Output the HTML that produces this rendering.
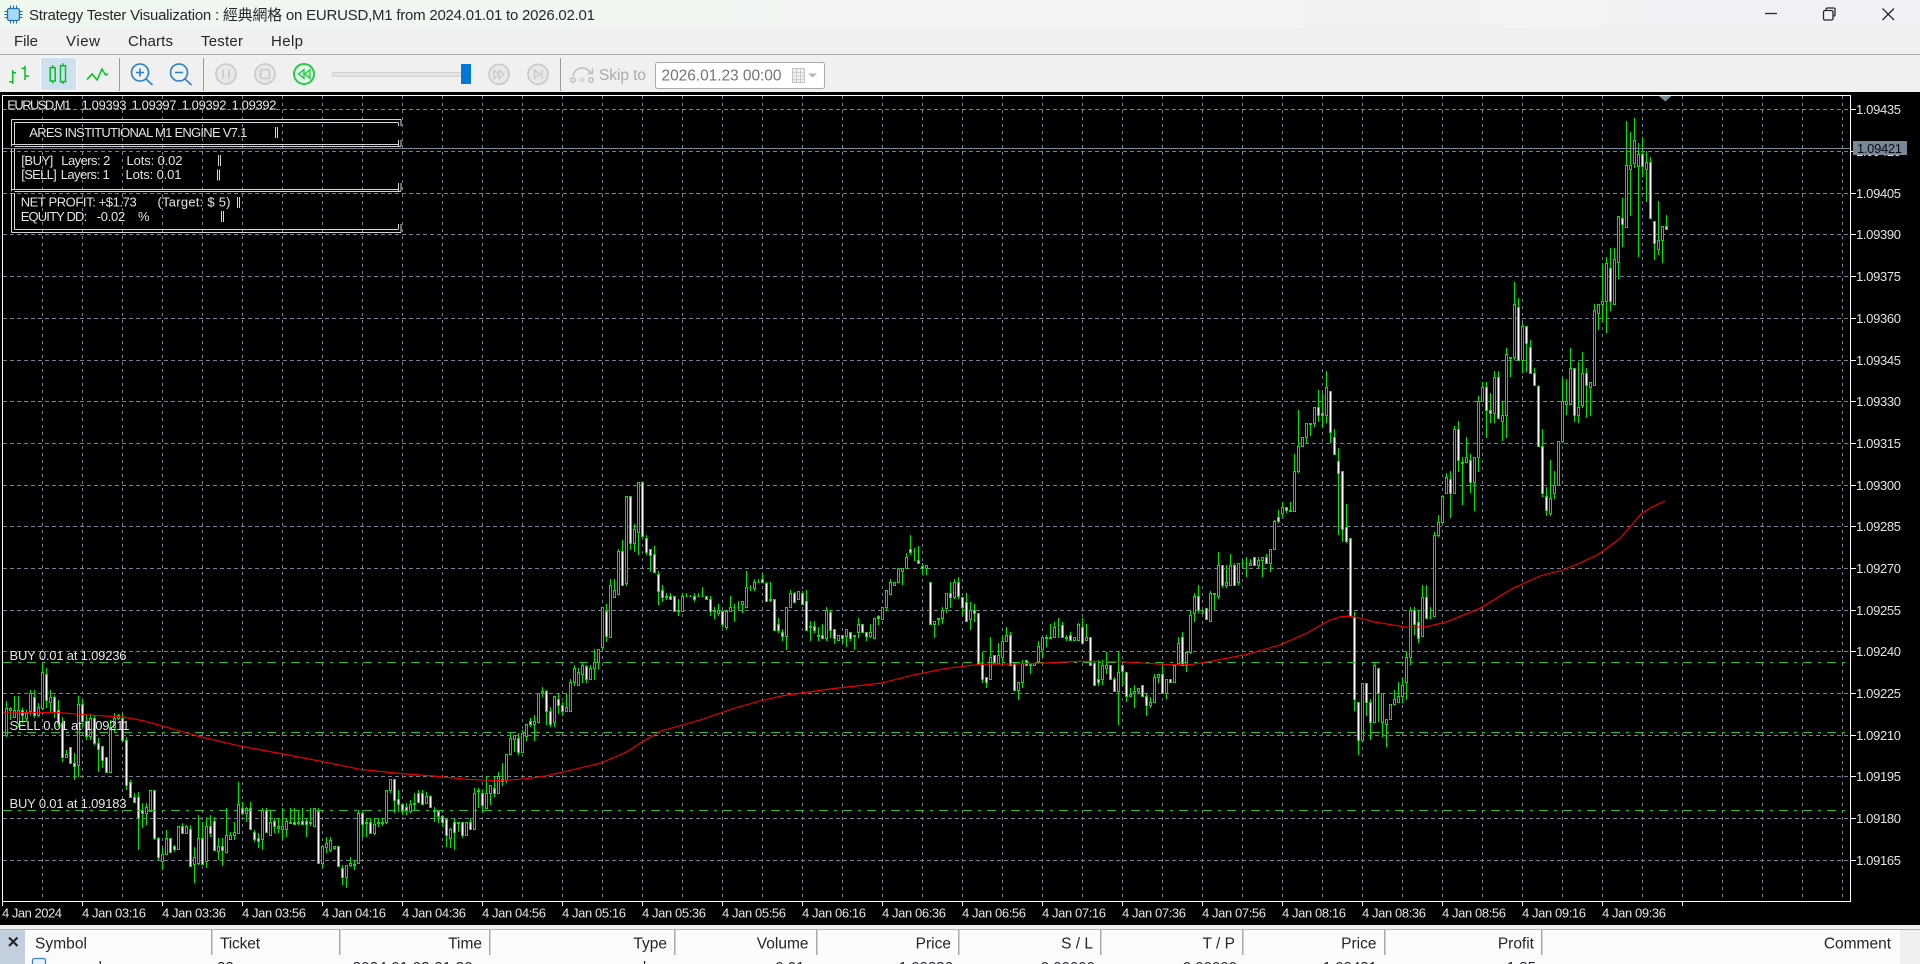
<!DOCTYPE html>
<html><head><meta charset="utf-8"><title>Strategy Tester Visualization</title>
<style>
html,body{margin:0;padding:0;width:1920px;height:964px;overflow:hidden;background:#000}
svg{display:block}
text{font-family:"Liberation Sans","Noto Sans CJK TC",sans-serif}
.m{font-size:15px;fill:#22262c}
.c{font-size:13px;fill:#e4e4e4}
.h{font-size:15.5px;fill:#22262c}
.r{font-size:15px;fill:#22262c}
</style></head><body>
<svg xmlns="http://www.w3.org/2000/svg" width="1920" height="964" viewBox="0 0 1920 964">
<defs><linearGradient id="tb" x1="0" x2="1" y1="0" y2="0"><stop offset="0" stop-color="#eef8ef"/><stop offset=".5" stop-color="#f2f4f1"/><stop offset="1" stop-color="#f3f0f6"/></linearGradient></defs>
<rect width="1920" height="964" fill="#000"/>
<rect width="1920" height="28" fill="url(#tb)"/>
<rect y="28" width="1920" height="65" fill="#f0f0f0"/>
<rect y="54" width="1920" height="1" fill="#a9a9a9"/>
<!-- title icon -->
<g stroke="#1e6fb0" fill="none"><rect x="7.5" y="8.5" width="12" height="12" rx="2" fill="#a6dbf7" stroke-width="1.3"/><path d="M4.5 11.5h3M4.5 14.5h3M4.5 17.5h3M19.5 11.5h3M19.5 14.5h3M19.5 17.5h3M10.5 5.5v3M13.5 5.5v3M16.5 5.5v3M10.5 20.5v3M13.5 20.5v3M16.5 20.5v3" stroke-width="1"/></g>
<text x="29" y="20" font-size="15" fill="#26282c" textLength="566">Strategy Tester Visualization : 經典網格 on EURUSD,M1 from 2024.01.01 to 2026.02.01</text>
<!-- window buttons -->
<g stroke="#26282c" fill="none" stroke-width="1.3"><path d="M1765 13.5h12"/><rect x="1823.5" y="10.5" width="9.5" height="9.5" rx="1.5"/><path d="M1826 10v-1a1.5 1.5 0 0 1 1.5-1h6a1.5 1.5 0 0 1 1.5 1v6a1.5 1.5 0 0 1-1.5 1h-.5"/><path d="M1882.500 8.500l11.500 11.500M1894 8.500l-11.500 11.500"/></g>
<!-- menu -->
<text class="m" x="14" y="46" textLength="24">File</text>
<text class="m" x="66" y="46" textLength="34">View</text>
<text class="m" x="128" y="46" textLength="45">Charts</text>
<text class="m" x="201" y="46" textLength="42">Tester</text>
<text class="m" x="271" y="46" textLength="32">Help</text>
<!-- toolbar -->
<path d="M9.300 81.700h3.400M12.700 84V70M12.700 72.700h3.400M25 80V65.700M25 68.300h-3.400M25 76h4" stroke="#00c020" stroke-width="1.500" fill="none"/>
<rect x="40.500" y="57.500" width="36" height="33" fill="#cfe0f0" stroke="#fafcff"/>
<g stroke="#00c020" fill="none" stroke-width="1.500"><path d="M52.700 65v18.300M63 63.300v20.700"/><rect x="50.200" y="67.700" width="5" height="13.300" fill="#cfe0f0"/><rect x="60.500" y="65.700" width="5" height="16" fill="#cfe0f0"/></g>
<path d="M87 79.500l5-5.500 5 6 5-11 3.500 6 2.500-1" stroke="#00c020" stroke-width="1.500" fill="none"/>
<rect x="119" y="58" width="1" height="33" fill="#9a9a9a"/>
<g stroke="#2a7fc8" fill="none" stroke-width="1.600"><circle cx="140" cy="72.500" r="8.500"/><path d="M146 79l6.500 6M136 72.500h8M140 68.500v8"/><circle cx="179" cy="72.500" r="8.500"/><path d="M185 79l6.500 6M175 72.500h8"/></g>
<rect x="203" y="58" width="1" height="33" fill="#9a9a9a"/>
<g stroke="#c8c8c8" fill="#e8e8e8" stroke-width="1.600"><circle cx="226" cy="74" r="10"/><path d="M223 69.500v9M229 69.500v9" fill="none"/><circle cx="265" cy="74" r="10"/><rect x="260.500" y="69.500" width="9" height="9" rx="2" fill="none"/></g>
<circle cx="304" cy="74" r="10" fill="#eaf8ee" stroke="#22cc44" stroke-width="2"/><path d="M304 69.500l-5.500 4.500 5.500 4.500zM310 69.500l-5.500 4.500 5.500 4.500z" fill="#b8ecc6" stroke="#22cc44" stroke-width="1.300"/>
<rect x="332.500" y="72.500" width="135" height="4" fill="#e4e4e4" stroke="#d4d4d4"/>
<rect x="461" y="64" width="10" height="20" fill="#0078d7"/>
<g stroke="#c8c8c8" fill="#e8e8e8" stroke-width="1.600"><circle cx="499" cy="74.300" r="10"/><path d="M494 70l5 4.300-5 4.300zM499 70l5 4.300-5 4.300z" fill="none" stroke-width="1.200"/><circle cx="538" cy="74.300" r="10"/><path d="M534.500 70l5.500 4.300-5.500 4.300zM542 70v8.600" fill="none" stroke-width="1.200"/></g>
<rect x="560" y="58" width="1" height="33" fill="#9a9a9a"/>
<g stroke="#bdbdbd" fill="none" stroke-width="1.500"><path d="M573 76c1-6 6-8.500 10-8 3 .5 6 2 8 5"/><path d="M592.500 68.500v5h-5"/><circle cx="573" cy="80" r="2.200"/><circle cx="591" cy="80" r="2.200"/></g><circle cx="582" cy="80" r="2.500" fill="#d6d6d6"/>
<text x="599" y="80" font-size="15.500" fill="#ababab" textLength="47">Skip to</text>
<rect x="655.500" y="62.500" width="169" height="26" rx="2" fill="#fff" stroke="#ababab"/>
<text x="661.500" y="80.500" font-size="15.500" fill="#757575" textLength="120">2026.01.23 00:00</text>
<g stroke="#c4c4c4" fill="#f2f2f2"><rect x="792.500" y="68.500" width="12" height="14"/><path d="M792.500 72.500h12M792.500 76h12M792.500 79.500h12M796.500 68.500v14M800.500 68.500v14" fill="none" stroke-width=".8"/></g><path d="M808 73.500h9l-4.500 4z" fill="#b4b4b4"/>
<!-- chart black -->
<rect x="0" y="92" width="1920" height="833" fill="#000"/>
<g shape-rendering="crispEdges" fill="none">
<path id="gh" stroke="#708294" stroke-width="1" stroke-dasharray="4 3" d="M3 109.500H1851M3 151.500H1851M3 193.500H1851M3 234.500H1851M3 276.500H1851M3 318.500H1851M3 360.500H1851M3 401.500H1851M3 443.500H1851M3 485.500H1851M3 526.500H1851M3 568.500H1851M3 610.500H1851M3 651.500H1851M3 693.500H1851M3 735.500H1851M3 776.500H1851M3 818.500H1851M3 860.500H1851"/>
<path id="gv" stroke="#708294" stroke-width="1" stroke-dasharray="3 4" d=""/>
<path id="wk" stroke="#00e400" stroke-width="1"/>
<path id="bu" stroke="#00e400" stroke-width="1" fill="#000"/>
<path id="be" stroke="#00e400" stroke-width="1" fill="#fff"/>
<path stroke="#22c422" stroke-width="1.300" stroke-dasharray="9 6 3 6" d="M3 662.500H1851M3 732.500H1851M3 810.500H1851"/>
<path stroke="#778899" stroke-width="1.300" d="M3 148.500H1851"/>
<rect x="2.500" y="95.500" width="1848" height="806" stroke="#fff" stroke-width="1.200"/>
<path id="tk" stroke="#fff" stroke-width="1" d="M1851 109.500h5M1851 151.500h5M1851 193.500h5M1851 234.500h5M1851 276.500h5M1851 318.500h5M1851 360.500h5M1851 401.500h5M1851 443.500h5M1851 485.500h5M1851 526.500h5M1851 568.500h5M1851 610.500h5M1851 651.500h5M1851 693.500h5M1851 735.500h5M1851 776.500h5M1851 818.500h5M1851 860.500h5"/>
</g>
<path d="M1659 96h12.500l-6.200 5.500z" fill="#778899"/>
<polyline fill="none" stroke="#ee0000" stroke-width="1.150" points="3,713 40,712.300 60,712.700 93,715.300 123,717 143,720.700 167,727.300 200,736.700 240,746 283,754 323,761.700 360,769.300 400,773.500 433,776 467,779.300 500,780.700 527,778.700 545,776 560,772.700 580,768 600,763.300 615,757 627,751.700 640,743.300 661,731 700,720 735,708 760,701 784,695.500 830,689 882,683 913,675 947,668.300 980,664.300 1013,664 1047,663 1080,661.300 1120,661.700 1163,664.300 1190,664.700 1213,661 1247,654.300 1280,645 1307,633 1330,620 1340,617 1348,616 1360,618 1373,621.700 1407,627.300 1427,626.700 1447,621.700 1480,608.300 1513,588.300 1540,576 1563,570 1580,563 1597,555 1610,546 1620,538.300 1630,527 1641,514 1652,507 1665,501"/>
<!-- HUD -->
<g fill="none" stroke="#d6d6d6" stroke-width="1">
<path d="M11.500 119.500H401M14.500 122.500H398M11.500 144.500H398M14.500 146.500H401M11.500 189.500H398M14.500 191.500H401M14.500 229.500H398M11.500 232.500H401"/>
<path d="M11.500 119.500V146.500M14.500 122.500V144.500M11.500 149V191.500M14.500 149V189.500M11.500 193V232.500M14.500 193V229.500"/>
<path d="M398.500 122.500V126M401 119.500V126M398.500 140V146M401 140V146M398.500 183V191M401 183V191M398.500 224V229.500M401 224V232.500"/>
<path d="M275.500 127V138M277.500 127V138M218.500 155V166M220.500 155V166M217.500 169.500V180.500M219.500 169.500V180.500M237.500 197V208M239.500 197V208M221.500 211V222M223.500 211V222"/>
</g>
<text class="c" x="7.300" y="109.500" textLength="64">EURUSD,M1</text>
<text class="c" x="81.500" y="109.500" textLength="45">1.09393</text>
<text class="c" x="131.500" y="109.500" textLength="45">1.09397</text>
<text class="c" x="181.500" y="109.500" textLength="45">1.09392</text>
<text class="c" x="231.500" y="109.500" textLength="45">1.09392</text>
<text class="c" x="29.300" y="137" textLength="218">ARES INSTITUTIONAL M1 ENGINE V7.1</text>
<text class="c" x="21.300" y="165" textLength="32">[BUY]</text><text class="c" x="61.300" y="165" textLength="49">Layers: 2</text><text class="c" x="126.500" y="165" textLength="56">Lots: 0.02</text>
<text class="c" x="21.300" y="179" textLength="35.500">[SELL]</text><text class="c" x="60.700" y="179" textLength="49">Layers: 1</text><text class="c" x="125.500" y="179" textLength="56">Lots: 0.01</text>
<text class="c" x="20.700" y="206.500" textLength="116">NET PROFIT: +$1.73</text><text class="c" x="157.500" y="206.500" textLength="73">(Target: $ 5)</text>
<text class="c" x="20.700" y="221" textLength="66.500">EQUITY DD:</text><text class="c" x="96.700" y="221" textLength="28.500">-0.02</text><text class="c" x="138" y="221" textLength="11">%</text>
<!-- trade labels -->
<text class="c" x="9.500" y="660" textLength="117">BUY 0.01 at 1.09236</text>
<text class="c" x="9.500" y="730" textLength="120">SELL 0.01 at 1.09211</text>
<text class="c" x="9.500" y="808" textLength="117">BUY 0.01 at 1.09183</text>
<!-- price labels -->
<g>
<text class="c" x="1856" y="114" textLength="45">1.09435</text>
<text class="c" x="1856" y="156" textLength="45">1.09420</text>
<text class="c" x="1856" y="198" textLength="45">1.09405</text>
<text class="c" x="1856" y="239" textLength="45">1.09390</text>
<text class="c" x="1856" y="281" textLength="45">1.09375</text>
<text class="c" x="1856" y="323" textLength="45">1.09360</text>
<text class="c" x="1856" y="365" textLength="45">1.09345</text>
<text class="c" x="1856" y="406" textLength="45">1.09330</text>
<text class="c" x="1856" y="448" textLength="45">1.09315</text>
<text class="c" x="1856" y="490" textLength="45">1.09300</text>
<text class="c" x="1856" y="531" textLength="45">1.09285</text>
<text class="c" x="1856" y="573" textLength="45">1.09270</text>
<text class="c" x="1856" y="615" textLength="45">1.09255</text>
<text class="c" x="1856" y="656" textLength="45">1.09240</text>
<text class="c" x="1856" y="698" textLength="45">1.09225</text>
<text class="c" x="1856" y="740" textLength="45">1.09210</text>
<text class="c" x="1856" y="781" textLength="45">1.09195</text>
<text class="c" x="1856" y="823" textLength="45">1.09180</text>
<text class="c" x="1856" y="865" textLength="45">1.09165</text>
</g>
<rect x="1853" y="141" width="54" height="14" fill="#778899"/>
<text x="1857" y="153" font-size="13" fill="#0c0c0c" textLength="45">1.09421</text>
<!-- time labels -->
<g>
<text class="c" x="2" y="917.500" textLength="60">4 Jan 2024</text>
<text class="c" x="82" y="917.500" textLength="64">4 Jan 03:16</text>
<text class="c" x="162" y="917.500" textLength="64">4 Jan 03:36</text>
<text class="c" x="242" y="917.500" textLength="64">4 Jan 03:56</text>
<text class="c" x="322" y="917.500" textLength="64">4 Jan 04:16</text>
<text class="c" x="402" y="917.500" textLength="64">4 Jan 04:36</text>
<text class="c" x="482" y="917.500" textLength="64">4 Jan 04:56</text>
<text class="c" x="562" y="917.500" textLength="64">4 Jan 05:16</text>
<text class="c" x="642" y="917.500" textLength="64">4 Jan 05:36</text>
<text class="c" x="722" y="917.500" textLength="64">4 Jan 05:56</text>
<text class="c" x="802" y="917.500" textLength="64">4 Jan 06:16</text>
<text class="c" x="882" y="917.500" textLength="64">4 Jan 06:36</text>
<text class="c" x="962" y="917.500" textLength="64">4 Jan 06:56</text>
<text class="c" x="1042" y="917.500" textLength="64">4 Jan 07:16</text>
<text class="c" x="1122" y="917.500" textLength="64">4 Jan 07:36</text>
<text class="c" x="1202" y="917.500" textLength="64">4 Jan 07:56</text>
<text class="c" x="1282" y="917.500" textLength="64">4 Jan 08:16</text>
<text class="c" x="1362" y="917.500" textLength="64">4 Jan 08:36</text>
<text class="c" x="1442" y="917.500" textLength="64">4 Jan 08:56</text>
<text class="c" x="1522" y="917.500" textLength="64">4 Jan 09:16</text>
<text class="c" x="1602" y="917.500" textLength="64">4 Jan 09:36</text>
</g>
<!-- bottom table -->
<rect y="925" width="1920" height="39" fill="#f0f0f0"/>
<rect y="929" width="1920" height="1" fill="#b4b4b4"/>
<rect x="25" y="930" width="1875" height="34" fill="#fbfbfb"/>
<rect x="0" y="930" width="25" height="34" fill="#c2d0de"/>
<path d="M9 937.500l8.500 8.500M17.500 937.500l-8.500 8.500" stroke="#222" stroke-width="2" fill="none"/>
<g fill="#a8a8a8"><rect x="211" y="930" width="1.500" height="25"/><rect x="339" y="930" width="1.500" height="25"/><rect x="489" y="930" width="1.500" height="25"/><rect x="674" y="930" width="1.500" height="25"/><rect x="816" y="930" width="1.500" height="25"/><rect x="958" y="930" width="1.500" height="25"/><rect x="1100" y="930" width="1.500" height="25"/><rect x="1242" y="930" width="1.500" height="25"/><rect x="1384" y="930" width="1.500" height="25"/><rect x="1541" y="930" width="1.500" height="25"/></g>
<text class="h" x="35" y="948.500" textLength="52">Symbol</text>
<text class="h" x="220" y="948.500" textLength="40">Ticket</text>
<text class="h" x="482" y="948.500" text-anchor="end">Time</text>
<text class="h" x="667" y="948.500" text-anchor="end">Type</text>
<text class="h" x="808.500" y="948.500" text-anchor="end">Volume</text>
<text class="h" x="951" y="948.500" text-anchor="end">Price</text>
<text class="h" x="1093" y="948.500" text-anchor="end">S / L</text>
<text class="h" x="1235" y="948.500" text-anchor="end">T / P</text>
<text class="h" x="1376.500" y="948.500" text-anchor="end">Price</text>
<text class="h" x="1534" y="948.500" text-anchor="end">Profit</text>
<text class="h" x="1891" y="948.500" text-anchor="end">Comment</text>
<rect x="32.500" y="958.500" width="13" height="13" rx="2" fill="#e8f2fb" stroke="#3b7fc8" stroke-width="1.300"/>
<text class="r" x="58" y="972" textLength="44">eurusd</text>
<text class="r" x="217" y="972">22</text>
<text class="r" x="352.600" y="972" textLength="120">2024.01.03 21:30</text>
<text class="r" x="667" y="972" text-anchor="end">buy</text>
<text class="r" x="804.500" y="972" text-anchor="end">0.01</text>
<text class="r" x="953" y="972" text-anchor="end">1.09236</text>
<text class="r" x="1095" y="972" text-anchor="end">0.00000</text>
<text class="r" x="1237" y="972" text-anchor="end">0.00000</text>
<text class="r" x="1377" y="972" text-anchor="end">1.09421</text>
<text class="r" x="1536" y="972" text-anchor="end">1.85</text>
</svg>
<script>
var S=[
[640,1,"183 203 285 290 0|200 203 210 240 0|168 210 230 235 0|168 210 250 260 0|205 210 225 250 1|210 220 235 245 0|150 160 213 225 0|150 170 225 235 1|190 202 225 230 0|65 95 205 210 0|85 103 180 205 1|150 170 185 215 0|165 170 215 235 1|180 210 250 260 1|230 250 352 365 1|330 343 352 355 0|320 320 370 372 1|340 370 377 420 1|168 193 375 410 0|178 193 243 260 1|225 243 287 300 1|222 235 287 300 0|225 235 310 315 1|295 310 327 395 1|318 318 360 385 1|352 352 395 395 1|240 260 395 395 0|220 235 260 275 0|222 225 235 240 0|220 235 300 305 1|290 300 436 450 1|420 425 470 475 1|460 470 485 490 1|455 470 535 630 1|490 510 520 565 1|490 500 520 555 0|450 450 512 512 0|450 450 595 600 1|590 595 652 660 1|620 642 662 690 0|570 595 643 645 0|595 595 635 635 1|615 618 628 635 1|558 558 628 630 0|548 558 578 580 1|555 558 580 580 0|555 568 677 680 1|620 650 672 730 0|525 595 670 675 0|545 595 672 675 1|530 558 662 685 0|525 558 578 590 1|530 543 630 630 1|595 618 632 660 0|595 618 630 678 1|505 586 635 635 0|575 586 596 600 0|545 576 586 600 0|425 492 578 580 0|485 503 520 525 1|500 503 520 545 0|485 503 568 570 1|570 576 596 605 1|580 595 602 625 1|505 510 596 630 0|503 510 577 580 1|510 545 585 585 0|535 543 558 580 1|535 558 563 580 0|505 558 568 600 0|535 543 568 590 0|503 545 550 550 0|503 545 553 555 1|510 547 550 555 0|503 543 553 555 1|535 543 553 590 1|503 545 548 558 0|503 503 558 560 0|505 512 670 672 1|618 618 670 680 0|590 610 620 640 0|590 600 630 635 0|618 618 625 630 0|618 618 678 680 1|675 684 710 735 1|675 676 710 745 0|652 670 676 680 0|660 672 675 690 0|510 520 670 672 0|515 520 553 595 1|535 547 550 590 0|535 545 578 580 1|535 553 578 585 0|535 547 550 560 0|535 547 550 558 0|450 450 545 553 0|418 418 450 460 0|418 418 480 520 1|450 478 493 515 1|490 493 512 525 1|490 502 510 525 1|480 492 512 520 0|460 490 493 510 0|450 460 485 490 1|450 460 493 495 1|455 468 490 492 0|465 468 502 505 1|500 510 513 545 0|510 513 527 550 1|525 527 545 560 1|535 537 586 620 1|565 568 595 625 0|535 547 577 630 1|545 545 548 575 0|545 545 586 595 1|545 545 586 588 0|535 545 568 570 1|445 460 568 570 0"],
[580,119,"625 631 634 685 0|630 640 675 700 1|588 640 683 685 0|615 615 640 675 0|588 625 640 650 1|575 588 640 640 0|550 598 604 618 1|522 522 600 608 0|458 475 523 525 0|466 466 476 515 0|460 475 515 525 1|450 458 515 515 0|433 433 467 483 0|415 424 433 440 1|405 424 433 483 0|340 340 425 425 0|322 332 340 350 0|330 332 392 435 1|382 392 433 442 1|349 349 425 440 0|340 358 374 402 1|365 374 392 408 1|340 382 392 392 0|298 307 392 392 0|255 265 307 318 0|265 275 315 318 0|248 256 283 308 0|255 257 298 308 1|255 265 298 300 0|208 247 265 300 0|208 208 247 267 0"],
[460,150,"442 442 560 570 0|432 452 527 545 1|358 376 532 532 0|358 391 410 412 0|268 274 401 401 0|240 274 376 378 1|109 109 368 378 0|109 109 250 270 1|192 208 250 275 0|67 67 217 285 0|67 67 227 232 1|225 233 275 285 1|267 267 284 335 1|258 283 335 335 1|333 343 392 435 1|375 391 410 425 1|400 408 410 420 0|400 408 418 420 1|408 408 452 452 1|418 450 452 468 0|400 408 452 452 0|400 407 409 410 0|405 408 409 410 0|400 408 418 425 1|400 408 409 410 0|381 408 409 410 0|408 408 418 420 1|408 418 452 468 1|442 450 452 476 0|433 450 458 468 0|450 452 493 500 1|450 452 500 510 0|408 442 452 452 0|433 440 441 485 0|422 440 441 450 0|422 424 433 458 0|333 381 442 442 0|375 380 381 392 0|358 367 383 392 0|358 366 367 368 0|343 358 367 368 1|366 368 424 425 1|366 418 420 425 0|418 418 509 510 1|475 493 509 518 1|508 517 527 543 1|442 442 527 570 0|390 400 442 442 0|395 400 425 425 1|392 392 418 420 0|392 400 433 435 1|390 424 509 510 1|483 498 500 543 0|483 498 509 518 1|500 525 527 543 0|492 525 533 535 1|442 450 533 543 0|450 457 509 533 1|508 508 533 552 1|526 526 541 542 0|526 526 533 552 1|508 508 527 560 0|517 517 533 543 1|525 525 527 570 0|475 492 517 533 0|492 492 517 518 1|517 517 527 543 1|492 517 527 533 0|475 475 533 533 0|465 467 475 495 1"],
[520,220,"262 262 297 297 0|211 211 262 272 0|178 187 221 221 0|187 187 196 196 0|145 145 187 187 0|145 145 154 196 0|100 111 145 145 0|45 88 95 105 1|85 92 93 122 0|78 121 128 130 1|128 137 145 165 1|136 136 145 165 0|187 187 313 313 1|304 304 313 353 0|295 295 296 315 0|262 270 295 313 0|220 220 263 278 0|187 220 230 263 1|178 187 230 238 0|170 187 229 238 1|230 230 262 287 1|220 245 304 304 1|245 270 296 330 0|252 270 278 305 1|278 278 433 433 1|395 428 478 490 1|470 470 487 503 1|352 412 478 478 0|404 404 428 428 1|370 404 428 428 0|345 362 412 428 0|320 346 362 362 0|337 346 436 436 1|428 428 511 513 1|487 487 511 540 0|420 428 487 503 0|420 421 436 436 1|428 432 434 463 0|428 428 436 436 0|362 379 424 424 0|352 352 388 412 0|345 352 353 380 0|312 352 353 353 0|305 320 352 352 0|295 314 315 353 0|305 314 352 353 1|345 352 353 362 0|337 346 361 361 1|352 352 361 361 0|310 313 361 361 0|295 320 370 372 1|313 352 361 361 0|352 352 436 436 1|425 428 496 496 1|420 478 487 497 1|420 436 478 495 0|395 436 445 463 0|436 436 478 478 1|470 478 512 512 1|395 455 512 615 0|436 436 454 495 1|455 455 529 545 1|505 521 529 530 0|495 512 520 563 0|503 503 512 520 0|496 496 529 530 1|520 529 554 587 1|530 545 554 565 0|462 470 545 545 0|463 463 470 488 0|435 463 520 520 1|478 478 520 538 0|478 478 487 487 1|436 436 487 487 0|352 370 428 428 0|335 352 436 436 1|395 395 436 455 0|270 286 395 403 0|220 229 278 305 0|195 229 270 278 1|270 278 279 280 0|263 263 296 296 1|212 220 304 304 0|220 220 221 270 0|95 136 229 238 0|136 136 196 203 1|136 187 196 203 0|102 136 196 196 0|130 136 196 196 1|128 128 187 195 0|118 128 129 145 0|112 128 129 170 0|118 128 136 136 0|112 112 136 138 1|112 120 136 145 0|112 112 120 170 0|103 112 128 128 1|88 88 128 155 0|0 3 88 88 0|-30 -10 3 10 1"],
[260,320,"725 742 758 770 0|742 742 750 760 1|725 750 752 752 0|582 634 752 752 0|450 558 634 640 0|532 532 558 560 0|490 490 532 548 0|490 490 491 528 0|442 442 490 500 0|390 442 466 486 1|400 458 466 500 1|333 382 466 490 0|392 392 516 550 1|507 532 583 583 1|565 602 640 825 1|634 634 807 845 1|732 800 842 850 1|833 833 1067 1067 1|1055 1070 1318 1352 1|1325 1325 1440 1485 1|1268 1268 1440 1443 0|1268 1268 1325 1367 1|1316 1325 1385 1440 1|1208 1216 1385 1385 0|1225 1225 1300 1385 1|1300 1300 1385 1430 0|1376 1376 1393 1460 0|1333 1333 1376 1376 0|1290 1317 1333 1333 0|1267 1308 1325 1325 0|1250 1275 1308 1330 0|1175 1192 1267 1320 0|1040 1050 1192 1215 0|1040 1050 1093 1125 1|1050 1085 1133 1150 1|975 1010 1127 1127 0|975 1010 1075 1075 1|1040 1074 1075 1075 0|815 825 1067 1067 0|765 785 825 830 0|708 708 785 785 0|640 650 700 700 0|633 658 700 775 1|498 508 700 700 0|483 508 600 635 1|590 607 608 735 0|532 592 607 607 0|583 600 667 700 1|592 592 667 752 0|408 424 592 635 0|365 382 424 424 0|365 382 450 533 1|400 450 458 490 1|333 350 458 490 0|333 350 474 476 1|424 466 484 543 0|265 283 466 533 0|292 292 293 350 0|66 132 292 300 0|115 142 300 300 1|190 198 300 340 0|198 198 249 335 1|240 260 340 340 1|325 340 375 375 1|375 377 558 560 1|507 558 700 710 1|682 708 750 767 1|600 715 758 767 0|633 676 700 716 0|542 542 676 676 0|352 424 542 550 0|358 424 433 466 0|265 325 433 435 0|325 325 466 486 1|305 442 466 490 0|275 340 435 445 0|325 340 375 475 1|367 367 382 468 0|132 150 375 377 0|133 133 158 210 0|8 123 133 185 0"],
[100,401,"470 488 603 698 0|445 505 603 632 1|445 478 613 613 0|347 347 487 537 0|293 355 372 440 1|63 195 380 380 0|96 195 206 347 0|54 121 188 205 0|130 163 197 472 0|110 163 197 230 1|153 187 206 305 0|170 187 355 355 1|364 364 430 480 1|303 421 446 465 0|379 379 421 488 0|345 379 388 388 1"]
];
var w="",bu="",be="",v="",i,j;
function q(a,y0){return y0+a/3}
for(i=0;i<S.length;i++){var y0=S[i][0],k=S[i][1],c=S[i][2].split("|");
for(j=0;j<c.length;j++,k++){var p=c[j].split(" ").map(Number),x=2.5+4*k,h=Math.round(q(p[0],y0)),t=Math.round(q(p[1],y0)),b=Math.round(q(p[2],y0)),l=Math.round(q(p[3],y0));
if(b<=t)b=t;
if(h<t)w+="M"+x+" "+h+"V"+(t+.5);
if(l>b)w+="M"+x+" "+(b+.5)+"V"+l;
var d="M"+(x-1)+" "+(t+.5)+"h2V"+(b+.5)+"h-2Z";
if(p[4])be+=d;else bu+=d;}}
for(i=0;i<47;i++){v+="M"+(2.5+40*i)+" 96V901"}
var tk="";for(i=0;i<22;i++){tk+="M"+(2.5+80*i)+" 901v5"}
document.getElementById("wk").setAttribute("d",w);
document.getElementById("bu").setAttribute("d",bu);
document.getElementById("be").setAttribute("d",be);
document.getElementById("gv").setAttribute("d",v);
var T=document.getElementById("tk");T.setAttribute("d",T.getAttribute("d")+tk);
</script>
</body></html>
